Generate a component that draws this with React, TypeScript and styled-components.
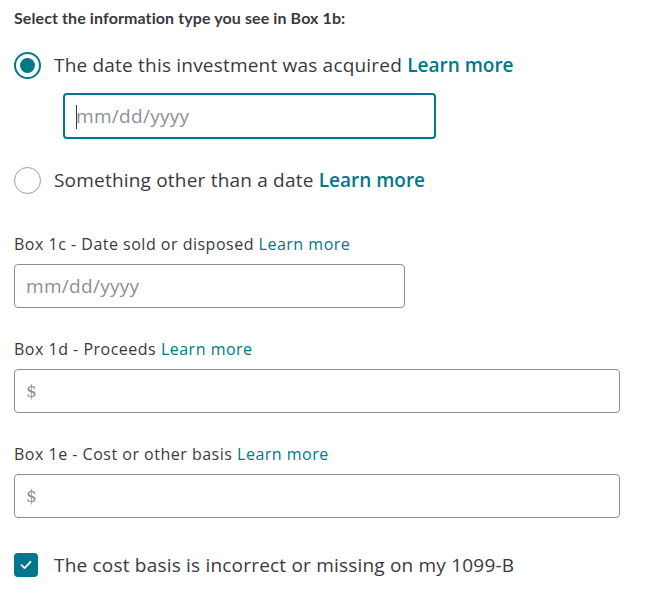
import styled, { createGlobalStyle } from "styled-components";

const teal = "#00778a";
const ink = "#393a3d";
const muted = "#8d9096";

const GlobalStyle = createGlobalStyle`
  body {
    margin: 0;
    background: #fff;
    font-family: "Open Sans", "Lato", sans-serif;
    color: ${ink};
  }
`;

export default function App() {
  return (
    <>
      <GlobalStyle />
      <Form>
        <Heading>Select the information type you see in Box 1b:</Heading>

        <RadioRow $top={21}>
          <Radio $checked />
          <OptionText>
            The date this investment was acquired <StrongLink>Learn more</StrongLink>
          </OptionText>
        </RadioRow>

        <NestedField>
          <TextBox $width={373} $focused>
            <Input placeholder="mm/dd/yyyy" />
            <Caret />
          </TextBox>
        </NestedField>

        <RadioRow $top={27}>
          <Radio />
          <OptionText>
            Something other than a date <StrongLink>Learn more</StrongLink>
          </OptionText>
        </RadioRow>

        <Field $top={38}>
          <Label>
            Box 1c - Date sold or disposed <Link>Learn more</Link>
          </Label>
          <TextBox $width={391}>
            <Input placeholder="mm/dd/yyyy" />
          </TextBox>
        </Field>

        <Field $top={29}>
          <Label>
            Box 1d - Proceeds <Link>Learn more</Link>
          </Label>
          <TextBox $width={606}>
            <Dollar>$</Dollar>
            <Input />
          </TextBox>
        </Field>

        <Field $top={29}>
          <Label>
            Box 1e - Cost or other basis <Link>Learn more</Link>
          </Label>
          <TextBox $width={606}>
            <Dollar>$</Dollar>
            <Input />
          </TextBox>
        </Field>

        <CheckRow>
          <CheckBox>
            <svg width="14" height="14" viewBox="0 0 14 14" fill="none">
              <path
                d="M2.5 7.2 L5.6 10.2 L11.5 3.8"
                stroke="#fff"
                strokeWidth="1.8"
                strokeLinecap="round"
                strokeLinejoin="round"
              />
            </svg>
          </CheckBox>
          <OptionText>The cost basis is incorrect or missing on my 1099-B</OptionText>
        </CheckRow>
      </Form>
    </>
  );
}

const Form = styled.div`
  padding: 6px 14px 20px;
  display: flex;
  flex-direction: column;
  align-items: flex-start;
`;

const Heading = styled.div`
  font-family: "Lato", "Open Sans", sans-serif;
  font-size: 16px;
  font-weight: 700;
  line-height: 24px;
  letter-spacing: 0.1px;
`;

const RadioRow = styled.div<{ $top: number }>`
  margin-top: ${(p) => p.$top}px;
  display: flex;
  align-items: center;
  gap: 13px;
  height: 28px;
`;

const Radio = styled.span<{ $checked?: boolean }>`
  box-sizing: border-box;
  width: 27px;
  height: 27px;
  border-radius: 50%;
  border: ${(p) => (p.$checked ? `2px solid ${teal}` : "1px solid #9a9ca1")};
  display: flex;
  align-items: center;
  justify-content: center;

  &::after {
    content: "";
    display: ${(p) => (p.$checked ? "block" : "none")};
    width: 15px;
    height: 15px;
    border-radius: 50%;
    background: ${teal};
  }
`;

const OptionText = styled.span`
  font-size: 19px;
  line-height: 24px;
  letter-spacing: 0.2px;
`;

const StrongLink = styled.a`
  color: ${teal};
  font-weight: 600;
  letter-spacing: 0;
  cursor: pointer;
`;

const Link = styled.a`
  color: ${teal};
  cursor: pointer;
`;

const NestedField = styled.div`
  margin-top: 14px;
  padding-left: 49px;
`;

const Field = styled.div<{ $top: number }>`
  margin-top: ${(p) => p.$top}px;
  display: flex;
  flex-direction: column;
  gap: 8px;
`;

const Label = styled.div`
  font-size: 16px;
  line-height: 24px;
  letter-spacing: 0.5px;
`;

const TextBox = styled.div<{ $width: number; $focused?: boolean }>`
  position: relative;
  box-sizing: border-box;
  width: ${(p) => p.$width}px;
  height: ${(p) => (p.$focused ? 46 : 44)}px;
  border: ${(p) => (p.$focused ? `2px solid ${teal}` : `1px solid ${muted}`)};
  border-radius: 4px;
  display: flex;
  align-items: center;
  padding: 0 11px;
  gap: 4px;
`;

const Input = styled.input`
  flex: 1;
  min-width: 0;
  border: none;
  outline: none;
  padding: 0;
  background: transparent;
  font-family: inherit;
  font-size: 19px;
  letter-spacing: 0.3px;
  color: ${ink};

  &::placeholder {
    color: ${muted};
  }
`;

const Caret = styled.span`
  position: absolute;
  left: 11px;
  top: 10px;
  width: 1px;
  height: 24px;
  background: ${ink};
  pointer-events: none;
`;

const Dollar = styled.span`
  font-family: "DejaVu Serif", serif;
  font-size: 17px;
  color: ${muted};
  font-weight: 300;
`;

const CheckRow = styled.div`
  margin-top: 35px;
  display: flex;
  align-items: center;
  gap: 16px;
`;

const CheckBox = styled.span`
  width: 24px;
  height: 24px;
  border-radius: 4px;
  background: ${teal};
  display: flex;
  align-items: center;
  justify-content: center;
`;
